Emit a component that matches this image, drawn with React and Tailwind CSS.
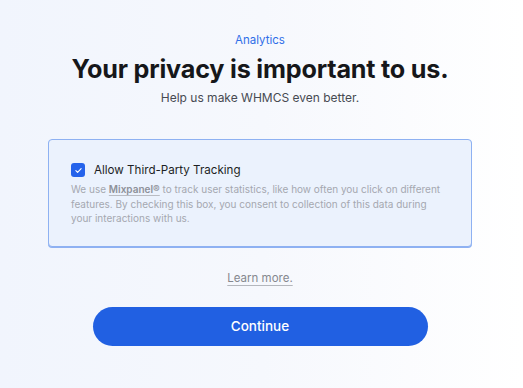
import React from "react";

const App = () => {
  return (
    <div
      className="w-[523px] h-[388px] overflow-hidden bg-linear-to-r from-[#f1f5fd] via-[#f6f8fd] to-white"
      style={{ fontFamily: "Inter, 'Noto Sans', sans-serif" }}
    >
      <div className="w-[520px] flex flex-col items-center">
        <p className="mt-[32px] text-[11.5px] leading-[16px] text-[#2f6ee8]">Analytics</p>
        <h1 className="mt-[6px] text-[25.2px] leading-[30px] font-bold tracking-[-0.2px] text-[#16171a]">
          Your privacy is important to us.
        </h1>
        <p className="mt-[6px] text-[12px] leading-[16px] text-[#474a52]">
          Help us make WHMCS even better.
        </p>

        <div className="mt-[33px] w-[424px] h-[108px] rounded-[4px] border border-[#8eb1f2] bg-[#ebf2fd] shadow-[0_1px_0_#8eb1f2] px-[22px] pt-[22px]">
          <label className="flex items-center gap-[9px]">
            <span className="w-[14px] h-[14px] rounded-[3px] bg-[#2563eb] flex items-center justify-center">
              <svg width="9" height="9" viewBox="0 0 12 12" fill="none">
                <path d="M2.5 6.2l2.3 2.3 4.7-5" stroke="white" strokeWidth="1.5" strokeLinecap="round" strokeLinejoin="round" />
              </svg>
            </span>
            <span className="text-[11.6px] leading-[16px] text-[#1d1f24]">Allow Third-Party Tracking</span>
          </label>
          <p className="mt-[4px] text-[10px] leading-[14.5px] text-[#a5a8b0]">
            We use{" "}
            <span className="font-semibold text-[#8e9199] underline decoration-[#b9bcc3] underline-offset-2">Mixpanel®</span>{" "}
            to track user statistics, like how often you click on different features. By checking this box, you consent to collection of this data during your interactions with us.
          </p>
        </div>

        <a className="mt-[23px] text-[11.5px] leading-[16px] text-[#85888f] underline decoration-[#b4b7bd] underline-offset-[3px]">
          Learn more.
        </a>

        <button className="mt-[21px] w-[335px] h-[39px] rounded-full bg-[#2160e2] text-white text-[13.5px] font-medium">
          Continue
        </button>
      </div>
    </div>
  );
};

export default App;
